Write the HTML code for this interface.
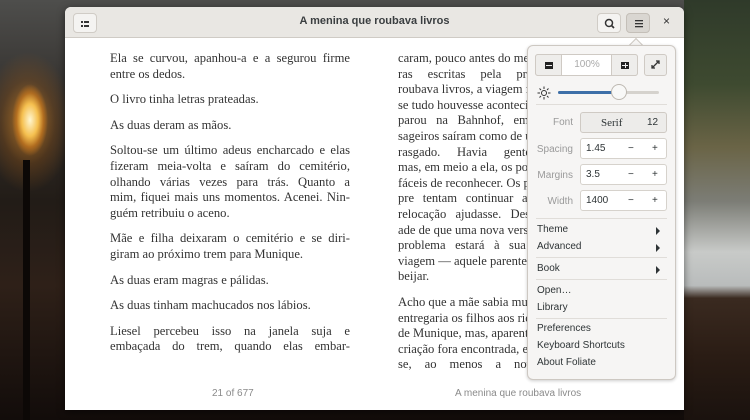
<!DOCTYPE html>
<html><head><meta charset="utf-8"><style>
*{margin:0;padding:0;box-sizing:border-box}
body{width:750px;height:420px;overflow:hidden;position:relative;font-family:"Liberation Sans","DejaVu Sans",sans-serif;
background:
radial-gradient(ellipse 18px 36px at 30px 120px,#fff6d0 0%,#f5c050 45%,rgba(200,120,30,0.7) 75%,rgba(0,0,0,0) 100%),
radial-gradient(ellipse 45px 70px at 28px 122px,rgba(220,140,40,0.75),rgba(160,90,20,0.3) 60%,rgba(0,0,0,0) 100%),
linear-gradient(180deg,#4e4e4c 0%,#35322f 22%,#221c17 48%,#2e2018 68%,#120c0a 100%);}
.rbg{position:absolute;left:684px;top:0;width:66px;height:420px;background:linear-gradient(180deg,#2f3a2a 0%,#3e4a30 20%,#6a6446 35%,#7c7d76 48%,#c8cac8 60%,#b9bcbc 68%,#3a2a20 71%,#2a1c14 85%,#1a120e 100%)}
.post{position:absolute;left:23px;top:160px;width:7px;height:260px;background:#0c0806}
.win{position:absolute;left:65px;top:7px;width:619px;height:403px;background:#fff;border-radius:6px 6px 0 0;overflow:hidden;box-shadow:0 2px 8px rgba(0,0,0,.5)}
.hb{position:absolute;left:0;top:0;width:619px;height:31px;background:#e9e7e3;border-bottom:1px solid #cfcbc5}
.title{position:absolute;left:0;width:619px;top:8px;text-align:center;font-size:11px;font-weight:bold;color:#3a3e40}
.btn{position:absolute;top:6px;width:24px;height:20px;border:1px solid #d0ccc6;border-radius:4px;background:#f4f3f1}
.page{position:absolute;font-family:"Liberation Serif","DejaVu Serif",serif;font-size:12.6px;color:#333;line-height:15.6px}
.page div{white-space:nowrap}
.j{text-align:justify;text-align-last:justify;white-space:normal!important}
.foot{position:absolute;top:381px;font-size:10px;color:#8a8a8a}
.pop{position:absolute;left:527px;top:45px;width:149px;height:335px;background:#f6f5f4;border:1px solid #cdc8c2;border-radius:6px;box-shadow:0 1px 3px rgba(0,0,0,.2);font-size:10px;color:#2e3436}
.arrow{position:absolute;left:631px;top:40px;width:10px;height:10px;background:#f6f5f4;border-left:1px solid #cdc8c2;border-top:1px solid #cdc8c2;transform:rotate(45deg)}
.ab{position:absolute}
.b{position:absolute;border:1px solid #cfcac4;background:#eeedeb}
.sep{position:absolute;left:8px;width:131px;height:1px;background:#e0ddd9}
.lbl{position:absolute;width:45px;text-align:right;color:#9a9a9a;left:0}
.spin{position:absolute;left:52px;width:87px;height:21px;border:1px solid #d6d2cc;background:#fff;border-radius:3px}
.spin span{position:absolute;top:4px}
.mi{position:absolute;left:9px}
.tri{position:absolute;right:15px;width:0;height:0;border-left:4px solid #2e3436;border-top:4px solid transparent;border-bottom:4px solid transparent}
</style></head><body>
<div class="rbg"></div><div class="post"></div>
<div class="win">
 <div class="hb">
  <div class="btn" style="left:8px"><svg width="24" height="20"><rect x="7" y="7" width="2" height="2" fill="#333"/><rect x="10" y="7" width="5" height="2" fill="#333"/><rect x="7" y="11" width="2" height="2" fill="#333"/><rect x="10" y="11" width="5" height="2" fill="#333"/></svg></div>
  <div class="title">A menina que roubava livros</div>
  <div class="btn" style="left:532px"><svg width="24" height="20"><circle cx="11" cy="9" r="3.5" stroke="#333" stroke-width="1.5" fill="none"/><line x1="13.5" y1="11.5" x2="16" y2="14" stroke="#333" stroke-width="1.7"/></svg></div>
  <div class="btn" style="left:561px;background:#d9d6d1;border-color:#c4bfb8"><svg width="24" height="20"><rect x="8" y="6" width="8" height="1.3" fill="#333"/><rect x="8" y="9" width="8" height="1.3" fill="#333"/><rect x="8" y="12" width="8" height="1.3" fill="#333"/></svg></div>
  <div style="position:absolute;left:598px;top:7px;font-size:12px;color:#333">×</div>
 </div>
 <div class="page" style="left:45px;top:44px;width:240px">
  <div class="j">Ela se curvou, apanhou-a e a segurou firme</div>
  <div>entre os dedos.</div>
  <div style="margin-top:10px">O livro tinha letras prateadas.</div>
  <div style="margin-top:10px">As duas deram as mãos.</div>
  <div style="margin-top:10px" class="j">Soltou-se um último adeus encharcado e elas</div>
  <div class="j">fizeram meia-volta e saíram do cemitério,</div>
  <div class="j">olhando várias vezes para trás. Quanto a</div>
  <div class="j">mim, fiquei mais uns momentos. Acenei. Nin-</div>
  <div>guém retribuiu o aceno.</div>
  <div style="margin-top:10px" class="j">Mãe e filha deixaram o cemitério e se diri-</div>
  <div>giram ao próximo trem para Munique.</div>
  <div style="margin-top:10px">As duas eram magras e pálidas.</div>
  <div style="margin-top:10px">As duas tinham machucados nos lábios.</div>
  <div style="margin-top:10px" class="j">Liesel percebeu isso na janela suja e</div>
  <div class="j">embaçada do trem, quando elas embar-</div>
 </div>
 <div class="page" style="left:333px;top:44px;width:240px">
  <div>caram, pouco antes do meio-dia. Nas pala-</div>
  <div class="j">ras escritas pela própria menina que</div>
  <div>roubava livros, a viagem foi como</div>
  <div>se tudo houvesse acontecido. Quando o trem</div>
  <div class="j">parou na Bahnhof, em Munique, os pas-</div>
  <div>sageiros saíram como de um embrulho</div>
  <div class="j">rasgado. Havia gente de todo tipo,</div>
  <div>mas, em meio a ela, os pobres eram os mais</div>
  <div>fáceis de reconhecer. Os pobres sem-</div>
  <div class="j">pre tentam continuar andando, como se a</div>
  <div class="j">relocação ajudasse. Desconhecem a realid-</div>
  <div>ade de que uma nova versão do velho</div>
  <div class="j">problema estará à sua espera no fim da</div>
  <div>viagem — aquele parente que elas têm de</div>
  <div>beijar.</div>
  <div style="margin-top:10px">Acho que a mãe sabia muito bem. Não</div>
  <div>entregaria os filhos aos ricos da alta classe</div>
  <div>de Munique, mas, aparentemente, uma</div>
  <div>criação fora encontrada, e, se nada mais</div>
  <div class="j">se, ao menos a nova família poderia</div>
 </div>
 <div class="foot" style="left:147px">21 of 677</div>
 <div class="foot" style="left:390px">A menina que roubava livros</div>
</div>
<div class="arrow"></div>
<div class="pop">
 <div class="b" style="left:7px;top:8px;width:103px;height:22px;border-radius:3px;background:#fff"></div>
 <div class="b" style="left:7px;top:8px;width:27px;height:22px;border-radius:3px 0 0 3px"><div style="position:absolute;left:9px;top:7px;width:8px;height:7px;background:#222"></div><div style="position:absolute;left:10px;top:10px;width:6px;height:1px;background:#eee"></div></div>
 <div style="position:absolute;left:34px;top:13px;width:50px;text-align:center;color:#aaa;font-size:10px">100%</div>
 <div class="b" style="left:83px;top:8px;width:27px;height:22px;border-radius:0 3px 3px 0"><div style="position:absolute;left:9px;top:7px;width:8px;height:7px;background:#222"></div><div style="position:absolute;left:10px;top:10px;width:6px;height:1px;background:#eee"></div><div style="position:absolute;left:12.5px;top:8px;width:1px;height:5px;background:#eee"></div></div>
 <div class="b" style="left:116px;top:8px;width:23px;height:22px;border-radius:3px"><svg width="21" height="20"><path d="M7 13l7-7M11 6h3v3M7 10v3h3" stroke="#333" stroke-width="1.3" fill="none"/></svg></div>
 <svg class="ab" style="left:9px;top:40px" width="14" height="14"><circle cx="7" cy="7" r="2.5" fill="none" stroke="#333"/><g stroke="#333" stroke-width="1"><line x1="7" y1="0.5" x2="7" y2="3"/><line x1="7" y1="11" x2="7" y2="13.5"/><line x1="0.5" y1="7" x2="3" y2="7"/><line x1="11" y1="7" x2="13.5" y2="7"/><line x1="2.5" y1="2.5" x2="4" y2="4"/><line x1="10" y1="10" x2="11.5" y2="11.5"/><line x1="2.5" y1="11.5" x2="4" y2="10"/><line x1="10" y1="4" x2="11.5" y2="2.5"/></g></svg>
 <div class="ab" style="left:30px;top:45px;width:101px;height:3px;background:#d5d2cd;border-radius:2px"></div>
 <div class="ab" style="left:30px;top:45px;width:60px;height:3px;background:#3d6fa8;border-radius:2px"></div>
 <div class="ab" style="left:83px;top:38px;width:16px;height:16px;border-radius:50%;background:#f8f8f7;border:1px solid #bdb8b1"></div>
 <div class="sep" style="top:58px"></div>
 <div class="lbl" style="top:71px">Font</div>
 <div class="b" style="left:52px;top:66px;width:87px;height:21px;border-radius:3px;background:#edecea"><span style="position:absolute;left:20px;top:4px;font-family:'Liberation Serif',serif;font-size:11px">Serif</span><span style="position:absolute;left:66px;top:4px">12</span></div>
 <div class="lbl" style="top:98px">Spacing</div>
 <div class="spin" style="top:92px"><span style="left:5px">1.45</span><span style="left:47px">−</span><span style="left:71px">+</span></div>
 <div class="lbl" style="top:124px">Margins</div>
 <div class="spin" style="top:118px"><span style="left:5px">3.5</span><span style="left:47px">−</span><span style="left:71px">+</span></div>
 <div class="lbl" style="top:150px">Width</div>
 <div class="spin" style="top:144px"><span style="left:5px">1400</span><span style="left:47px">−</span><span style="left:71px">+</span></div>
 <div class="sep" style="top:172px"></div>
 <div class="mi" style="top:178px">Theme</div><div class="tri" style="top:181px"></div>
 <div class="mi" style="top:195px">Advanced</div><div class="tri" style="top:198px"></div>
 <div class="sep" style="top:211px"></div>
 <div class="mi" style="top:217px">Book</div><div class="tri" style="top:220px"></div>
 <div class="sep" style="top:233px"></div>
 <div class="mi" style="top:239px">Open…</div>
 <div class="mi" style="top:256px">Library</div>
 <div class="sep" style="top:272px"></div>
 <div class="mi" style="top:277px">Preferences</div>
 <div class="mi" style="top:294px">Keyboard Shortcuts</div>
 <div class="mi" style="top:311px">About Foliate</div>
</div>
</body></html>
